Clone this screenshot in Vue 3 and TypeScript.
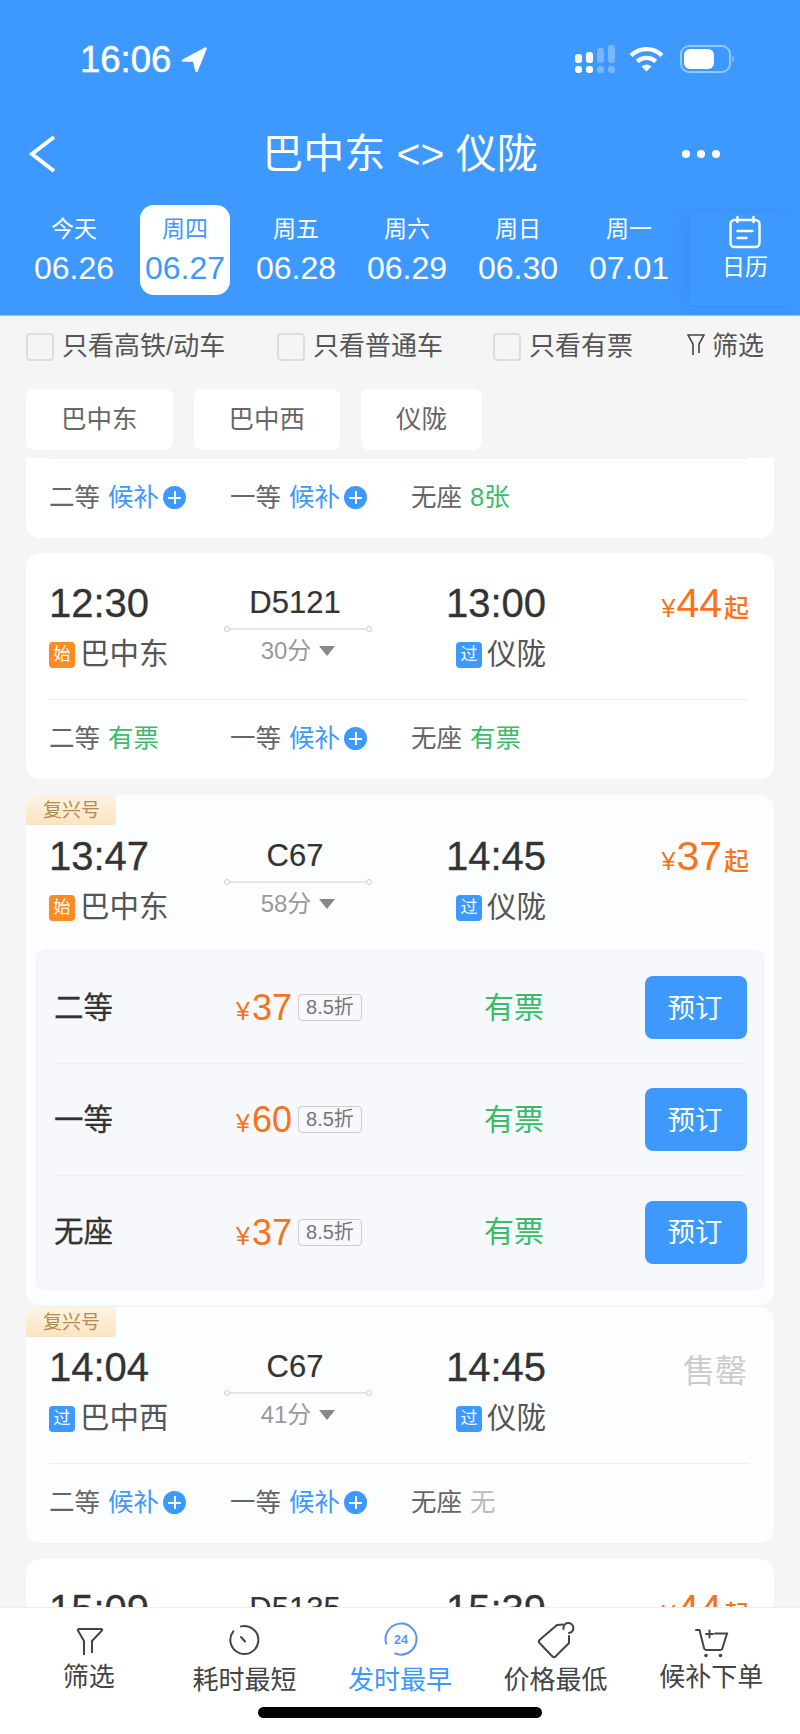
<template>
  <div class="page">
    <header class="header">
      <div class="status">
        <span class="clock">16:06</span>
        <svg class="loc" width="28" height="28" viewBox="0 0 28 28">
          <path d="M25.5 2.5 3 14.5h11l2.5 10.5z" fill="#fff" stroke="#fff" stroke-width="2.5" stroke-linejoin="round" />
        </svg>
        <div class="status-right">
          <svg width="42" height="30" viewBox="0 0 42 30" fill="#fff">
            <rect x="1" y="10" width="7" height="9" rx="3" />
            <rect x="1" y="22" width="7" height="7" rx="3" />
            <rect x="12" y="8" width="7" height="11" rx="3" />
            <rect x="12" y="22" width="7" height="7" rx="3" />
            <rect x="23" y="4" width="7" height="15" rx="3" opacity=".3" />
            <rect x="23" y="22" width="7" height="7" rx="3" opacity=".3" />
            <rect x="34" y="1" width="7" height="18" rx="3" opacity=".3" />
            <rect x="34" y="22" width="7" height="7" rx="3" opacity=".3" />
          </svg>
          <svg class="wifi" width="35" height="26" viewBox="0 0 35 26" fill="none" stroke="#fff" stroke-width="4.4">
            <path d="M2 9.5a22 22 0 0 1 31 0" />
            <path d="M8.3 15.5a13.5 13.5 0 0 1 18.4 0" />
            <path d="M12.5 20.5q5-4 10 0l-5 5z" fill="#fff" stroke="none" />
          </svg>
          <svg class="battery" width="56" height="28" viewBox="0 0 56 28" fill="none">
            <rect x="1" y="1" width="49" height="26" rx="8" stroke="#fff" stroke-opacity=".45" stroke-width="2" />
            <rect x="4" y="4" width="30" height="20" rx="6" fill="#fff" />
            <path d="M52.500 10.500q3 3.500 0 7z" fill="#fff" fill-opacity=".5" />
          </svg>
        </div>
      </div>

      <div class="nav">
        <svg width="30" height="40" viewBox="0 0 30 40" fill="none">
          <path d="M26 3 4 20l22 17" stroke="#fff" stroke-width="4" />
        </svg>
        <h1 class="title">巴中东 &lt;&gt; 仪陇</h1>
        <div class="more"><i></i><i></i><i></i></div>
      </div>

      <div class="dates">
        <div v-for="d in dates" :key="d.date" class="date" :class="{ active: d.active }">
          <span class="week">{{ d.week }}</span>
          <span class="day">{{ d.date }}</span>
        </div>
        <div class="calendar">
          <svg width="34" height="34" viewBox="0 0 34 34" fill="none" stroke="#fff" stroke-width="2.4" stroke-linecap="round">
            <rect x="2.500" y="5" width="29" height="27" rx="4" />
            <path d="M9.500 2v5M25.500 2v5" />
            <path d="M9.500 16h15M9.500 23h9" />
          </svg>
          <span>日历</span>
        </div>
      </div>
    </header>

    <div class="filters">
      <label v-for="f in filters" :key="f" class="check"><i></i><span>{{ f }}</span></label>
      <div class="filter-link">
        <svg width="18" height="24" viewBox="0 0 18 24" fill="none" stroke="#444" stroke-width="1.600">
          <path d="M6 22V11L1 2h16l-5 9v9" />
        </svg>
        <span>筛选</span>
      </div>
    </div>

    <div class="chips">
      <span v-for="s in stations" :key="s" class="chip">{{ s }}</span>
    </div>

    <div class="list">
      <div class="card partial">
        <div class="seats">
          <div v-for="s in partialSeats" :key="s.name" class="seat">
            <span>{{ s.name }}</span>
            <span class="val" :class="s.kind">{{ s.value }}</span>
            <i v-if="s.kind === 'wait'" class="plus"></i>
          </div>
        </div>
      </div>

      <div v-for="t in trains" :key="t.depart" class="card" :class="{ tinted: t.fuxing, open: t.rows }">
        <span v-if="t.fuxing" class="fuxing">复兴号</span>
        <div class="main">
          <div class="col">
            <div class="time">{{ t.depart }}</div>
            <div v-if="t.from" class="station">
              <b class="badge" :class="t.fromKind">{{ t.fromKind === 'start' ? '始' : '过' }}</b>{{ t.from }}
            </div>
          </div>
          <div class="col mid">
            <div class="no">{{ t.no }}</div>
            <template v-if="t.dur">
              <div class="line"></div>
              <div class="dur">{{ t.dur }}<i></i></div>
            </template>
          </div>
          <div class="col end">
            <div class="time">{{ t.arrive }}</div>
            <div v-if="t.from" class="station"><b class="badge pass">过</b>仪陇</div>
          </div>
          <div class="price" v-if="t.price"><small>¥</small>{{ t.price }}<em>起</em></div>
          <div class="price gone" v-else>售罄</div>
        </div>

        <div v-if="t.rows" class="panel">
          <div v-for="r in t.rows" :key="r.name" class="row">
            <span class="row-name">{{ r.name }}</span>
            <span class="row-price"><small>¥</small>{{ r.price }}<i>8.5折</i></span>
            <span class="row-left">有票</span>
            <button class="book"><span>预订</span></button>
          </div>
        </div>
        <div v-else-if="t.seats" class="seats">
          <div v-for="s in t.seats" :key="s.name" class="seat">
            <span>{{ s.name }}</span>
            <span class="val" :class="s.kind">{{ s.value }}</span>
            <i v-if="s.kind === 'wait'" class="plus"></i>
          </div>
        </div>
      </div>
    </div>

    <nav class="tabbar">
      <div class="tabs">
        <div class="tab">
          <svg width="40" height="40" viewBox="0 0 40 40" fill="none" stroke="#444" stroke-width="2">
            <path d="M15 35V21L9 10.500q-.6-1.500 1-1.500h22q1.600 0 1 1.500L23 21v12" />
          </svg>
          <span>筛选</span>
        </div>
        <div class="tab low">
          <svg width="40" height="40" viewBox="0 0 40 40" fill="none" stroke="#444" stroke-width="2" stroke-linecap="round">
            <path d="M17 6.400A14 14 0 1 1 9.300 11.400" />
            <path d="M17 17l4 4.500" />
          </svg>
          <span>耗时最短</span>
        </div>
        <div class="tab low on">
          <svg width="40" height="40" viewBox="0 0 40 40" fill="none" stroke="#5f93ee" stroke-width="2">
            <path d="M32 30A15.500 15.500 0 1 0 21 34.500" stroke-width="2" transform="rotate(70 21 19)" />
            <path d="M36 22A15.500 15.500 0 0 1 21 34.500" stroke-dasharray="1.500 1.500" />
            <text x="21" y="23.500" text-anchor="middle" class="tab-num">24</text>
          </svg>
          <span>发时最早</span>
        </div>
        <div class="tab low">
          <svg width="40" height="40" viewBox="0 0 40 40" fill="none" stroke="#444" stroke-width="2" stroke-linecap="round">
            <path d="M21 5 3.500 20q-1.500 1.500 0 3l13 13.500q1.500 1.500 3 0L33 23v-7" />
            <path d="M21 5l6-.5" />
            <path d="M27.500 9A5 5 0 1 1 33 13" />
          </svg>
          <span>价格最低</span>
        </div>
        <div class="tab">
          <svg width="40" height="40" viewBox="0 0 40 40" fill="none" stroke="#444" stroke-width="2" stroke-linecap="round">
            <path d="M5 10h3.500L13 28q.4 2 2 2h14.500q1.600 0 2-2L36 13.500H24" />
            <path d="M18.500 10.500v7M15 14h7" />
            <circle cx="15" cy="35.500" r="1.800" fill="#444" stroke="none" />
            <circle cx="29.500" cy="35.500" r="1.800" fill="#444" stroke="none" />
          </svg>
          <span>候补下单</span>
        </div>
      </div>
      <div class="home"></div>
    </nav>
  </div>
</template>

<script setup lang="ts">
interface Seat {
  name: string;
  value: string;
  kind: 'wait' | 'have' | 'none';
}

interface PriceRow {
  name: string;
  price: string;
}

interface Train {
  depart: string;
  arrive: string;
  no: string;
  dur?: string;
  from?: string;
  fromKind?: 'start' | 'pass';
  price: string;
  fuxing?: boolean;
  seats?: Seat[];
  rows?: PriceRow[];
}

const dates = [
  { week: '今天', date: '06.26' },
  { week: '周四', date: '06.27', active: true },
  { week: '周五', date: '06.28' },
  { week: '周六', date: '06.29' },
  { week: '周日', date: '06.30' },
  { week: '周一', date: '07.01' },
];

const filters = ['只看高铁/动车', '只看普通车', '只看有票'];
const stations = ['巴中东', '巴中西', '仪陇'];

const wait = (name: string): Seat => ({ name, value: '候补', kind: 'wait' });
const have = (name: string, value = '有票'): Seat => ({ name, value, kind: 'have' });

const partialSeats: Seat[] = [wait('二等'), wait('一等'), have('无座', '8张')];

const trains: Train[] = [
  {
    depart: '12:30', arrive: '13:00', no: 'D5121', dur: '30分', from: '巴中东', fromKind: 'start', price: '44',
    seats: [have('二等'), wait('一等'), have('无座')],
  },
  {
    depart: '13:47', arrive: '14:45', no: 'C67', dur: '58分', from: '巴中东', fromKind: 'start', price: '37', fuxing: true,
    rows: [
      { name: '二等', price: '37' },
      { name: '一等', price: '60' },
      { name: '无座', price: '37' },
    ],
  },
  {
    depart: '14:04', arrive: '14:45', no: 'C67', dur: '41分', from: '巴中西', fromKind: 'pass', price: '', fuxing: true,
    seats: [wait('二等'), wait('一等'), { name: '无座', value: '无', kind: 'none' }],
  },
  // only the top of this one shows above the tab bar
  { depart: '15:09', arrive: '15:39', no: 'D5135', price: '44' },
];
</script>

<style>
html,
body {
  margin: 0;
  background: #f5f5f5;
}
</style>

<style scoped>
.page {
  width: 800px;
  height: 1734px;
  display: flex;
  flex-direction: column;
  overflow: hidden;
  background: #f5f5f5;
  font-family: "Liberation Sans", "Noto Sans CJK SC", sans-serif;
  color: #333;
}

.header {
  height: 316px;
  box-sizing: border-box;
  padding-top: 45px;
  background: #3d99fe;
  border-bottom: 1px solid #8cc4ff;
  color: #fff;
}

.status {
  height: 28px;
  display: flex;
  align-items: center;
  padding: 0 64px 0 80px;
}

.clock {
  margin-top: 2px;
  font-size: 36.500px;
  line-height: 28px;
  -webkit-text-stroke: .5px #fff;
}

.loc {
  margin: 1px 0 0 9px;
}

.status-right {
  margin-left: auto;
  display: flex;
  align-items: center;
}

.wifi {
  margin-left: 13px;
}

.battery {
  margin-left: 16px;
}

.nav {
  height: 60px;
  margin-top: 51px;
  padding: 0 28px;
  display: grid;
  grid-template-columns: 1fr auto 1fr;
  align-items: center;
}

.title {
  margin: 0;
  font-size: 41px;
  line-height: 60px;
  font-weight: 400;
  white-space: nowrap;
}

.more {
  justify-self: end;
  margin-right: 52px;
  display: flex;
  gap: 7px;
}

.more i {
  width: 8px;
  height: 8px;
  border-radius: 50%;
  background: #fff;
}

.dates {
  height: 90px;
  margin-top: 21px;
  padding-left: 29px;
  display: flex;
  gap: 21px;
}

.date {
  width: 90px;
  height: 90px;
  flex: none;
  border-radius: 14px;
  display: flex;
  flex-direction: column;
  align-items: center;
}

.date.active {
  background: #fff;
  color: #3d99fe;
}

.week {
  margin-top: 10px;
  font-size: 23px;
  line-height: 28px;
}

.day {
  margin-top: 6px;
  font-size: 32px;
  line-height: 38px;
  white-space: nowrap;
}

.calendar {
  position: relative;
  width: 110px;
  height: 92px;
  margin: 8px 0 0 -5px;
  flex: none;
  box-shadow: -8px 0 12px rgba(40, 90, 170, .1);
  background: #3d99fe;
  display: flex;
  flex-direction: column;
  align-items: center;
  font-size: 23px;
  line-height: 34px;
}

.calendar svg {
  margin-top: 2px;
}

.calendar span {
  margin-top: 1px;
}

.filters {
  height: 62px;
  padding-left: 26px;
  display: grid;
  grid-template-columns: 251px 216px 194px auto;
  align-items: center;
  font-size: 26px;
  line-height: 32px;
  color: #555;
}

.check {
  display: flex;
  align-items: center;
  gap: 8px;
}

.check span,
.filter-link span {
  padding-bottom: 3px;
}

.check i {
  width: 28px;
  height: 28px;
  box-sizing: border-box;
  border: 2px solid #dedede;
  border-radius: 4px;
}

.filter-link {
  display: flex;
  align-items: center;
  gap: 7px;
}

.filter-link svg {
  margin-bottom: 4px;
}

.chips {
  margin-top: 11px;
  padding-left: 26px;
  display: flex;
  gap: 21px;
}

.chip {
  height: 61px;
  padding: 0 35px;
  border-radius: 8px;
  background: #fff;
  color: #666;
  font-size: 25.500px;
  line-height: 61px;
}

.list {
  flex: 1;
  min-height: 0;
  overflow: hidden;
  margin-top: 8px;
  padding: 0 26px;
}

.card {
  position: relative;
  margin-bottom: 16px;
  padding: 26px 25px 0 23px;
  border-radius: 14px;
  background: #fff;
}

.card.partial {
  margin-bottom: 15px;
  padding-top: 0;
  border-radius: 0 0 14px 14px;
}

.card.tinted {
  padding-top: 36px;
  background: #fcfdff;
}

.card.open {
  height: 510px;
  box-sizing: border-box;
  margin-bottom: 2px;
  padding: 37px 10px 0;
}

.fuxing {
  position: absolute;
  left: 0;
  top: 0;
  width: 90px;
  height: 30px;
  border-radius: 14px 0 3px 0;
  background: linear-gradient(#fdf3e3, #fbe3c0);
  color: #b08c50;
  font-size: 19px;
  line-height: 32px;
  text-align: center;
  text-indent: 1px;
}

.main {
  height: 120px;
  display: grid;
  grid-template-columns: 175px 148px 174px 1fr;
}

.open .main {
  height: 118px;
  margin: 0 15px 0 13px;
}

.time {
  height: 48px;
  font-size: 40px;
  line-height: 48px;
  color: #333;
  -webkit-text-stroke: .3px #333;
}

.station {
  height: 30px;
  margin-top: 12px;
  display: flex;
  align-items: center;
  font-size: 29.500px;
  line-height: 30px;
  color: #555;
}

.badge {
  width: 26px;
  height: 26px;
  margin: 2px 5px 0 0;
  border-radius: 4px;
  color: #fff;
  font-size: 17px;
  line-height: 26px;
  font-weight: 400;
  text-align: center;
}

.badge.start {
  background: #fb8b23;
}

.badge.pass {
  background: #3d99fe;
}

.mid {
  text-align: center;
}

.no {
  height: 48px;
  padding-right: 6px;
  font-size: 31px;
  line-height: 48px;
  color: #333;
  -webkit-text-stroke: .2px #333;
}

.line {
  position: relative;
  height: 2px;
  margin-top: 1px;
  background: #e5e5e5;
}

.line::before,
.line::after {
  content: "";
  position: absolute;
  top: -2px;
  width: 6px;
  height: 6px;
  box-sizing: border-box;
  border: 1px solid #ccc;
  border-radius: 50%;
  background: #fff;
}

.line::before {
  left: 0;
}

.line::after {
  right: 0;
}

.dur {
  height: 30px;
  margin-top: 6px;
  display: flex;
  justify-content: center;
  align-items: center;
  gap: 8px;
  font-size: 24px;
  line-height: 30px;
  color: #999;
}

.dur i {
  width: 0;
  height: 0;
  border-top: 10px solid #888;
  border-left: 8px solid transparent;
  border-right: 8px solid transparent;
}

.end {
  justify-items: end;
  display: grid;
  align-content: start;
}

.end .station {
  justify-self: end;
}

.price {
  height: 48px;
  text-align: right;
  font-size: 41px;
  line-height: 48px;
  color: #f5731c;
}

.price small {
  margin-right: 1px;
  font-size: 25px;
}

.price em {
  font-size: 25px;
  font-style: normal;
  font-weight: 500;
  margin-left: 2px;
}

.price.gone {
  margin: 4px 2px 0 0;
  font-size: 32px;
  color: #ccc;
}

.seats {
  height: 80px;
  box-sizing: border-box;
  border-top: 1px solid #f0f0f0;
  display: grid;
  grid-template-columns: 181px 181px 1fr;
  align-items: center;
  font-size: 25.500px;
  line-height: 30px;
  color: #666;
}

.seat {
  display: flex;
  align-items: center;
}

.seat span {
  padding-bottom: 3px;
}

.val {
  margin-left: 8px;
}

.val.wait {
  color: #3d99fe;
}

.val.have {
  color: #3cba6a;
}

.val.none {
  color: #bbb;
}

.plus {
  position: relative;
  width: 23px;
  height: 23px;
  margin: 0 0 2px 4px;
  border-radius: 50%;
  background: #3d99fe;
}

.plus::before,
.plus::after {
  content: "";
  position: absolute;
  background: #fff;
}

.plus::before {
  left: 5px;
  top: 10.500px;
  width: 13px;
  height: 2px;
}

.plus::after {
  left: 10.500px;
  top: 5px;
  width: 2px;
  height: 13px;
}

.panel {
  height: 340px;
  box-sizing: border-box;
  padding: 1px 16px 1px 17px;
  border: 1px solid #f0f0f2;
  border-radius: 10px;
  background: #f7f8fb;
}

.row {
  height: 112px;
  box-sizing: border-box;
  display: grid;
  grid-template-columns: 182px 248px 1fr auto;
  align-items: center;
  border-bottom: 1px solid #eeeef0;
  line-height: 40px;
}

.row:last-child {
  border-bottom: 0;
}

.row-name {
  font-size: 29.500px;
  color: #333;
  -webkit-text-stroke: .3px #333;
}

.row-price {
  display: flex;
  align-items: baseline;
  padding-top: 4px;
  font-size: 36px;
  color: #f5731c;
}

.row-price small {
  font-size: 25px;
  margin-right: 2px;
}

.row-price i {
  align-self: center;
  width: 64px;
  height: 27px;
  margin: -4px 0 0 6px;
  box-sizing: border-box;
  border: 1px solid #ccc;
  border-radius: 4px;
  color: #777;
  font-size: 20px;
  font-style: normal;
  line-height: 25px;
  text-align: center;
}

.row-left {
  font-size: 30px;
  color: #3cba6a;
}

.book {
  width: 102px;
  height: 63px;
  padding: 0 2px 4px 0;
  border: 0;
  border-radius: 8px;
  background: #3d99fe;
  color: #fff;
  font-family: inherit;
  font-size: 27.500px;
}

.tabbar {
  height: 127px;
  flex: none;
  box-sizing: border-box;
  border-top: 1px solid #eee;
  background: #fff;
}

.tabs {
  height: 99px;
  box-sizing: border-box;
  padding: 12px 11px 0;
  display: grid;
  grid-template-columns: repeat(5, 1fr);
}

.tab {
  display: flex;
  flex-direction: column;
  align-items: center;
  font-size: 26px;
  line-height: 30px;
  color: #444;
}

.tab span {
  margin-top: 2px;
}

.tab.low span {
  margin-top: 5px;
}

.tab.on {
  color: #3d99fe;
}

.tab-num {
  font-size: 12.500px;
  font-weight: 700;
  fill: #5f93ee;
  stroke: none;
}

.home {
  width: 284px;
  height: 11px;
  margin: 0 auto;
  border-radius: 6px;
  background: #000;
}
</style>
